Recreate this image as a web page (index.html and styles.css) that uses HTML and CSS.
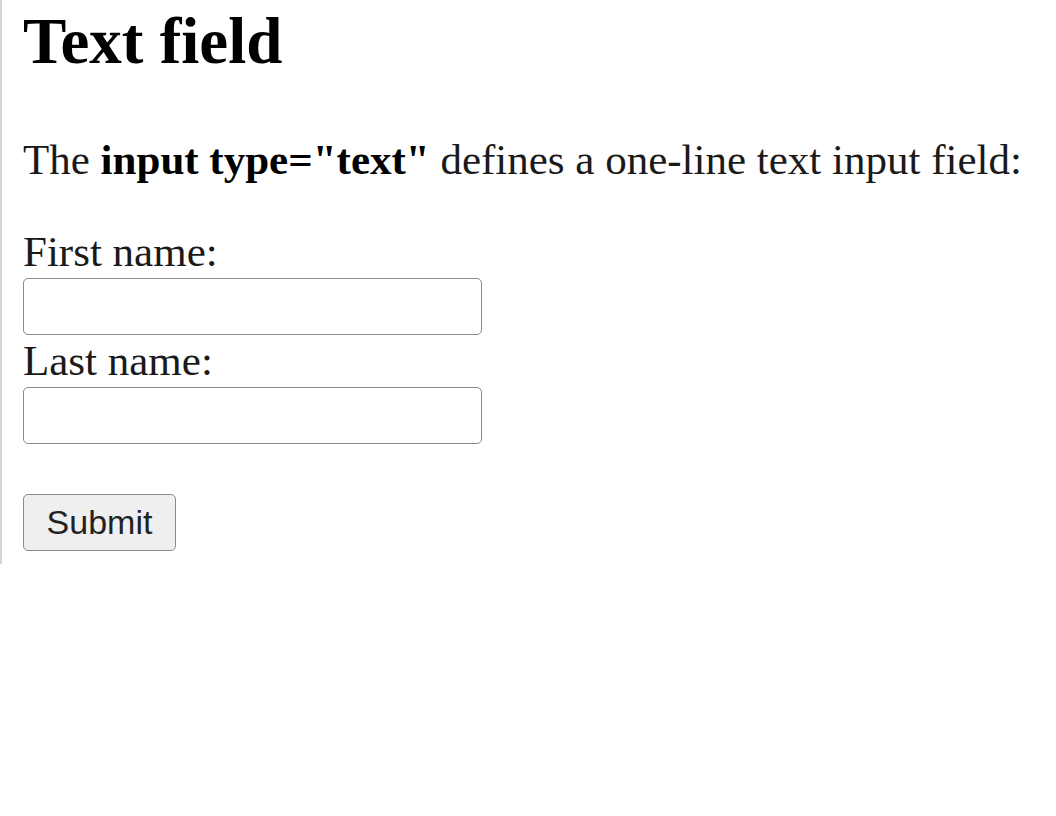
FILE: index.html
```html
<!DOCTYPE html>
<html>
<head>
<meta charset="utf-8">
<link rel="stylesheet" href="styles.css">
</head>
<body>
<div class="frame">
  <h1 class="title">Text field</h1>
  <p class="intro">The <b>input type="text"</b> defines a one-line text input field:</p>
  <form class="form">
    <label class="label" for="fname">First name:</label>
    <input class="field" type="text" id="fname" name="fname">
    <label class="label" for="lname">Last name:</label>
    <input class="field" type="text" id="lname" name="lname">
    <input class="submit" type="submit" value="Submit">
  </form>
</div>
</body>
</html>
```
FILE: styles.css
```css
html, body {
  margin: 0;
  padding: 0;
  background: #ffffff;
}
body {
  font-family: "Liberation Serif", "Times New Roman", serif;
  color: #000;
}
.frame {
  border-left: 2px solid #d4d4d4;
  padding: 4px 0 13px 21px;
  width: 1000px;
}
.title {
  font-size: 65px;
  font-weight: bold;
  line-height: 74.7px;
  margin: 0;
}
.intro {
  font-size: 43px;
  line-height: 50.6px;
  margin: 56px 0 0 0;
  color: #1a1a1a;
  white-space: nowrap;
}
.intro b {
  color: #000;
}
.form {
  display: flex;
  flex-direction: column;
  align-items: flex-start;
  margin-top: 41px;
}
.label {
  font-size: 43px;
  line-height: 52px;
  color: #1a1a1a;
}
.field {
  box-sizing: border-box;
  width: 459px;
  height: 57px;
  margin: 0;
  border: 1.5px solid #8a8a8a;
  border-radius: 5px;
  background: #fff;
  font-size: 30px;
}
.submit {
  box-sizing: border-box;
  margin: 50px 0 0 0;
  width: 153px;
  height: 57px;
  border: 1.5px solid #8a8a8a;
  border-radius: 5px;
  background: #efefef;
  font-family: "Liberation Sans", Arial, sans-serif;
  font-size: 34px;
  color: #222;
  padding: 0;
}
```
